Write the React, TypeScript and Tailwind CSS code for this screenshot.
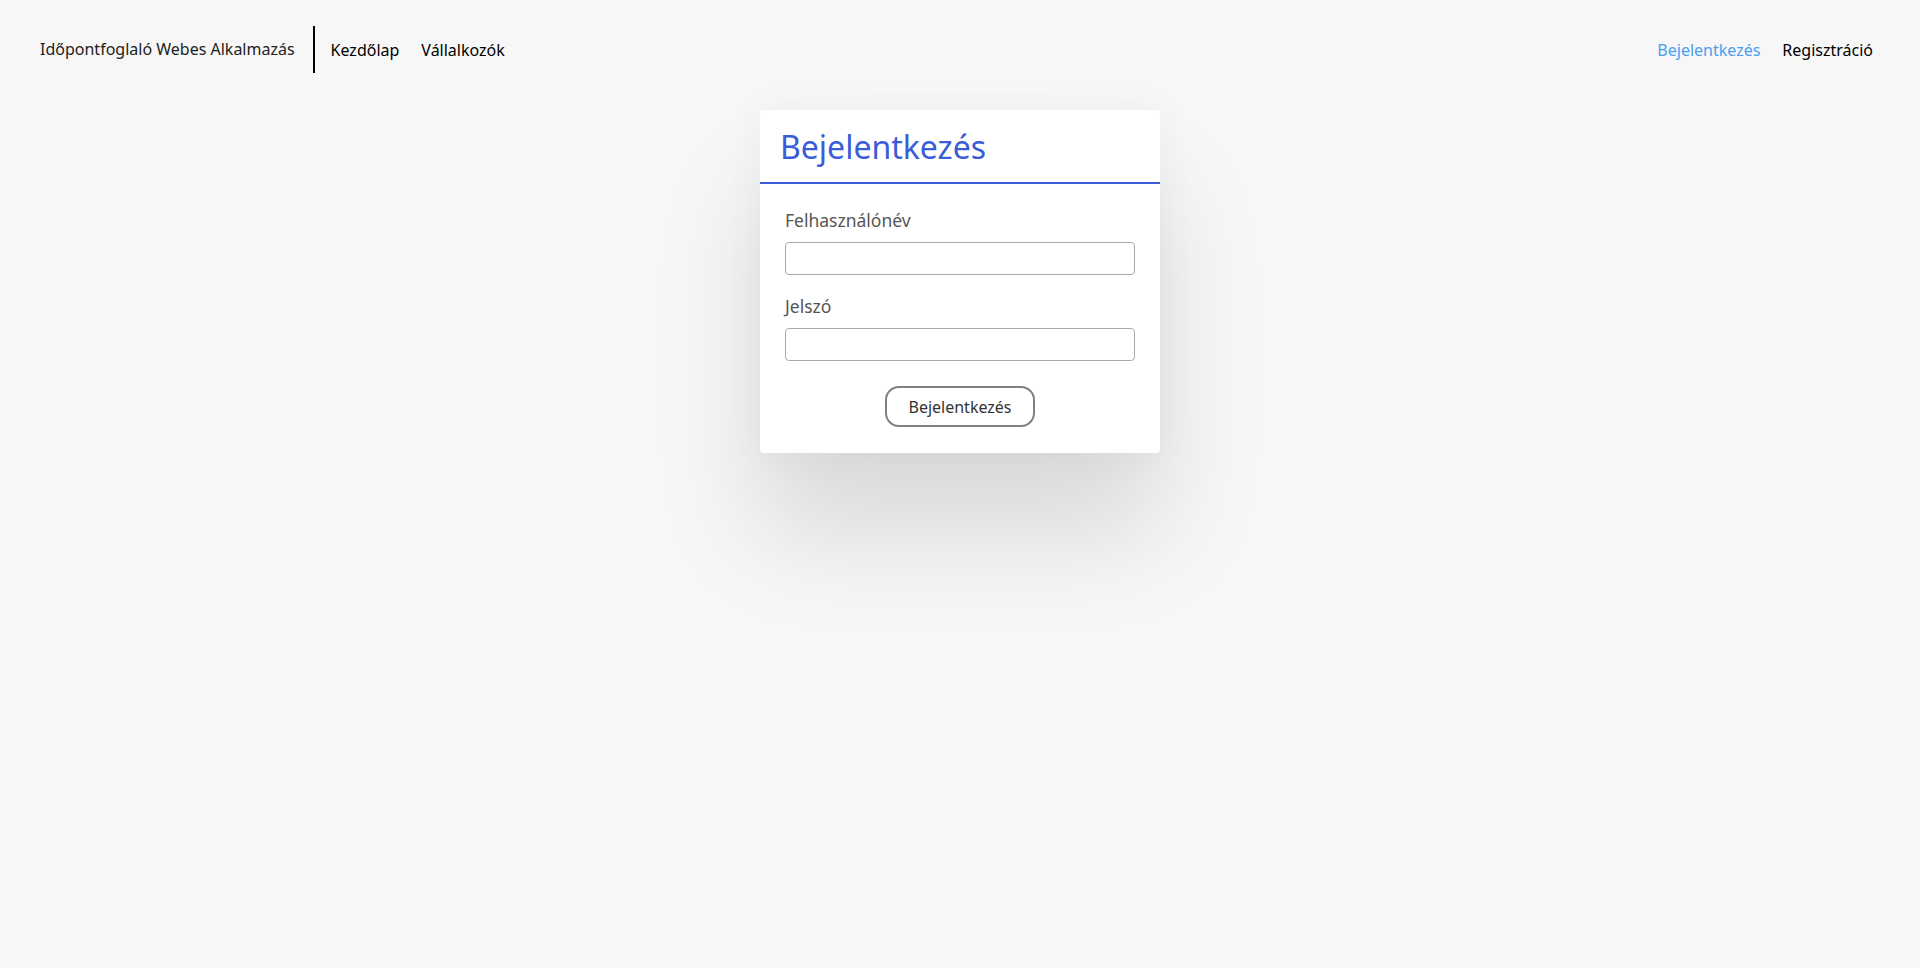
import { useState } from 'react'

export default function App() {
  const [username, setUsername] = useState('')
  const [password, setPassword] = useState('')

  return (
    <div className="min-h-screen bg-[#f7f7f7] font-['Noto_Sans',sans-serif]">
      {/* Navbar */}
      <nav className="flex items-center justify-between pl-10 pr-[47px] pt-[26px]">
        <div className="flex items-center">
          <span className="text-base text-[#222] leading-[47px] pr-[18px]">Időpontfoglaló Webes Alkalmazás</span>
          <div className="w-[2px] h-[47px] bg-black" />
          <a href="#" className="text-base text-black ml-[16px]">Kezdőlap</a>
          <a href="#" className="text-base text-black ml-[22px]">Vállalkozók</a>
        </div>
        <div className="flex items-center gap-[22px]">
          <a href="#" className="text-base text-[#4a9ef0]">Bejelentkezés</a>
          <a href="#" className="text-base text-black">Regisztráció</a>
        </div>
      </nav>

      {/* Login card */}
      <div className="flex justify-center mt-[37px]">
        <div className="w-[400px] bg-white rounded-[4px] shadow-[0_80px_110px_rgba(0,0,0,0.12),0_0_40px_rgba(0,0,0,0.04)]">
          <div className="px-5 pt-[13px] pb-[11px] border-b-2 border-[#3a5cd8]">
            <h1 className="text-[32px] leading-[48px] text-[#3a5cd8]">Bejelentkezés</h1>
          </div>
          <form className="px-[25px] pt-[23px] pb-[26px]" onSubmit={(e) => e.preventDefault()}>
            <label className="block text-[17.5px] leading-[27px] text-[#555] mb-[8px]">Felhasználónév</label>
            <input
              type="text"
              value={username}
              onChange={(e) => setUsername(e.target.value)}
              className="block w-full h-[33px] border border-[#aaa] rounded-[4px] px-2 outline-none"
            />
            <label className="block text-[17.5px] leading-[27px] text-[#555] mt-[18px] mb-[8px]">Jelszó</label>
            <input
              type="password"
              value={password}
              onChange={(e) => setPassword(e.target.value)}
              className="block w-full h-[33px] border border-[#aaa] rounded-[4px] px-2 outline-none"
            />
            <div className="flex justify-center mt-[25px]">
              <button
                type="submit"
                className="w-[150px] h-[41px] border-2 border-[#808080] rounded-[14px] bg-white text-base text-[#333]"
              >
                Bejelentkezés
              </button>
            </div>
          </form>
        </div>
      </div>
    </div>
  )
}
